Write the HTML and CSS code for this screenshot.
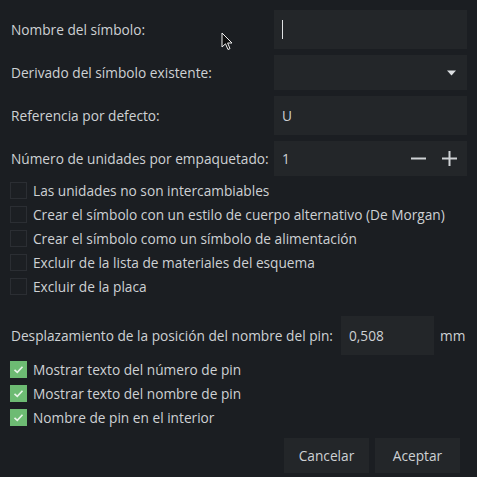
FILE: index.html
```html
<!DOCTYPE html>
<html lang="es">
<head>
<meta charset="utf-8">
<link rel="stylesheet" href="styles.css">
</head>
<body>
<div class="dialog">
  <div class="form">
    <div class="row r1">
      <span class="label">Nombre del símbolo:</span>
      <div class="field"><span class="caret"></span></div>
    </div>
    <div class="row r2">
      <span class="label">Derivado del símbolo existente:</span>
      <div class="field combo"><svg class="arrow" width="9" height="6" viewBox="0 0 9 6"><path d="M0 0.5 H9 L4.5 5.5 Z" fill="#dcdfe2"/></svg></div>
    </div>
    <div class="row r1">
      <span class="label">Referencia por defecto:</span>
      <div class="field"><span class="val">U</span></div>
    </div>
    <div class="row r2">
      <span class="label">Número de unidades por empaquetado:</span>
      <div class="field spin"><span class="val">1</span>
        <span class="spinbtns">
          <svg width="15" height="15" viewBox="0 0 15 15"><path d="M0 7.5 H15" stroke="#cfd2d5" stroke-width="2"/></svg>
          <svg width="15" height="15" viewBox="0 0 15 15"><path d="M0 7.5 H15 M7.5 0 V15" stroke="#cfd2d5" stroke-width="2"/></svg>
        </span>
      </div>
    </div>
  </div>

  <div class="checks first">
    <label class="check"><span class="box"></span>Las unidades no son intercambiables</label>
    <label class="check"><span class="box"></span>Crear el símbolo con un estilo de cuerpo alternativo (De Morgan)</label>
    <label class="check"><span class="box"></span>Crear el símbolo como un símbolo de alimentación</label>
    <label class="check"><span class="box"></span>Excluir de la lista de materiales del esquema</label>
    <label class="check"><span class="box"></span>Excluir de la placa</label>
  </div>

  <div class="offset">
    <span class="label">Desplazamiento de la posición del nombre del pin:</span>
    <div class="field small"><span class="val">0,508</span></div>
    <span class="unit">mm</span>
  </div>

  <div class="checks">
    <label class="check"><span class="box on"><svg width="17" height="17" viewBox="0 0 17 17"><path d="M4.5 8.8 L7.3 11.4 L12.5 5.8" fill="none" stroke="#e8f4e9" stroke-width="1.6"/></svg></span>Mostrar texto del número de pin</label>
    <label class="check"><span class="box on"><svg width="17" height="17" viewBox="0 0 17 17"><path d="M4.5 8.8 L7.3 11.4 L12.5 5.8" fill="none" stroke="#e8f4e9" stroke-width="1.6"/></svg></span>Mostrar texto del nombre de pin</label>
    <label class="check"><span class="box on"><svg width="17" height="17" viewBox="0 0 17 17"><path d="M4.5 8.8 L7.3 11.4 L12.5 5.8" fill="none" stroke="#e8f4e9" stroke-width="1.6"/></svg></span>Nombre de pin en el interior</label>
  </div>

  <div class="buttons">
    <button class="btn cancel">Cancelar</button>
    <button class="btn ok">Aceptar</button>
  </div>

  <svg class="pointer" width="14" height="20" viewBox="0 0 14 20"><path d="M1 1 V15 L4.5 11.8 L7 17.5 L9 16.6 L6.6 11 H11 Z" fill="#0d0d0d" stroke="#f0f0f0" stroke-width="1"/></svg>
</div>
</body>
</html>
```

FILE: styles.css
```css
html, body {
  margin: 0;
  padding: 0;
  background: #1b1e22;
}
.dialog {
  position: relative;
  width: 477px;
  height: 477px;
  box-sizing: border-box;
  padding: 10px 10px 0 10px;
  font-family: "Open Sans", "Noto Sans", sans-serif;
  font-size: 13.7px;
  color: #ced1d4;
}
.form {
  display: flex;
  flex-direction: column;
  gap: 6px;
}
.row {
  display: flex;
  align-items: center;
  justify-content: space-between;
}
.r1 { height: 39px; }
.r2 { height: 35px; }
.label {
  padding-left: 1px;
  white-space: nowrap;
}
.field {
  width: 193px;
  height: 100%;
  background: #232629;
  box-sizing: border-box;
  display: flex;
  align-items: center;
  padding-left: 8px;
  padding-right: 10px;
}
.caret {
  width: 1px;
  height: 19px;
  background: #dfe1e3;
}
.combo { justify-content: flex-end; padding-right: 11px; }
.arrow { display: block; }
.spin { justify-content: space-between; padding-right: 10px; }
.spinbtns { display: flex; gap: 16px; align-items: center; }
.spinbtns svg { display: block; }
.checks {
  display: flex;
  flex-direction: column;
}
.checks.first { margin-top: 2px; }
.check {
  display: flex;
  align-items: center;
  height: 24px;
  gap: 6px;
  white-space: nowrap;
}
.box {
  width: 17px;
  height: 17px;
  box-sizing: border-box;
  border: 1px solid #2b2e33;
  background: #1c1f23;
  display: block;
}
.box.on {
  background: #6dbb73;
  border-color: #6dbb73;
}
.box.on svg { display: block; margin: -1px; }
.offset {
  display: flex;
  align-items: center;
  height: 39px;
  margin-top: 18px;
  margin-bottom: 2px;
}
.offset .label { width: 330px; }
.small { width: 93px; }
.unit { margin-left: 6px; }
.buttons {
  display: flex;
  justify-content: flex-end;
  gap: 6px;
  margin-top: 9px;
  padding-right: 7px;
}
.btn {
  height: 35px;
  background: #232629;
  border: none;
  color: #ced1d4;
  font-family: "Open Sans", "Noto Sans", sans-serif;
  font-size: 13.7px;
  padding: 0;
}
.cancel { width: 85px; }
.ok { width: 85px; }
.pointer {
  position: absolute;
  left: 221px;
  top: 32px;
}
```
